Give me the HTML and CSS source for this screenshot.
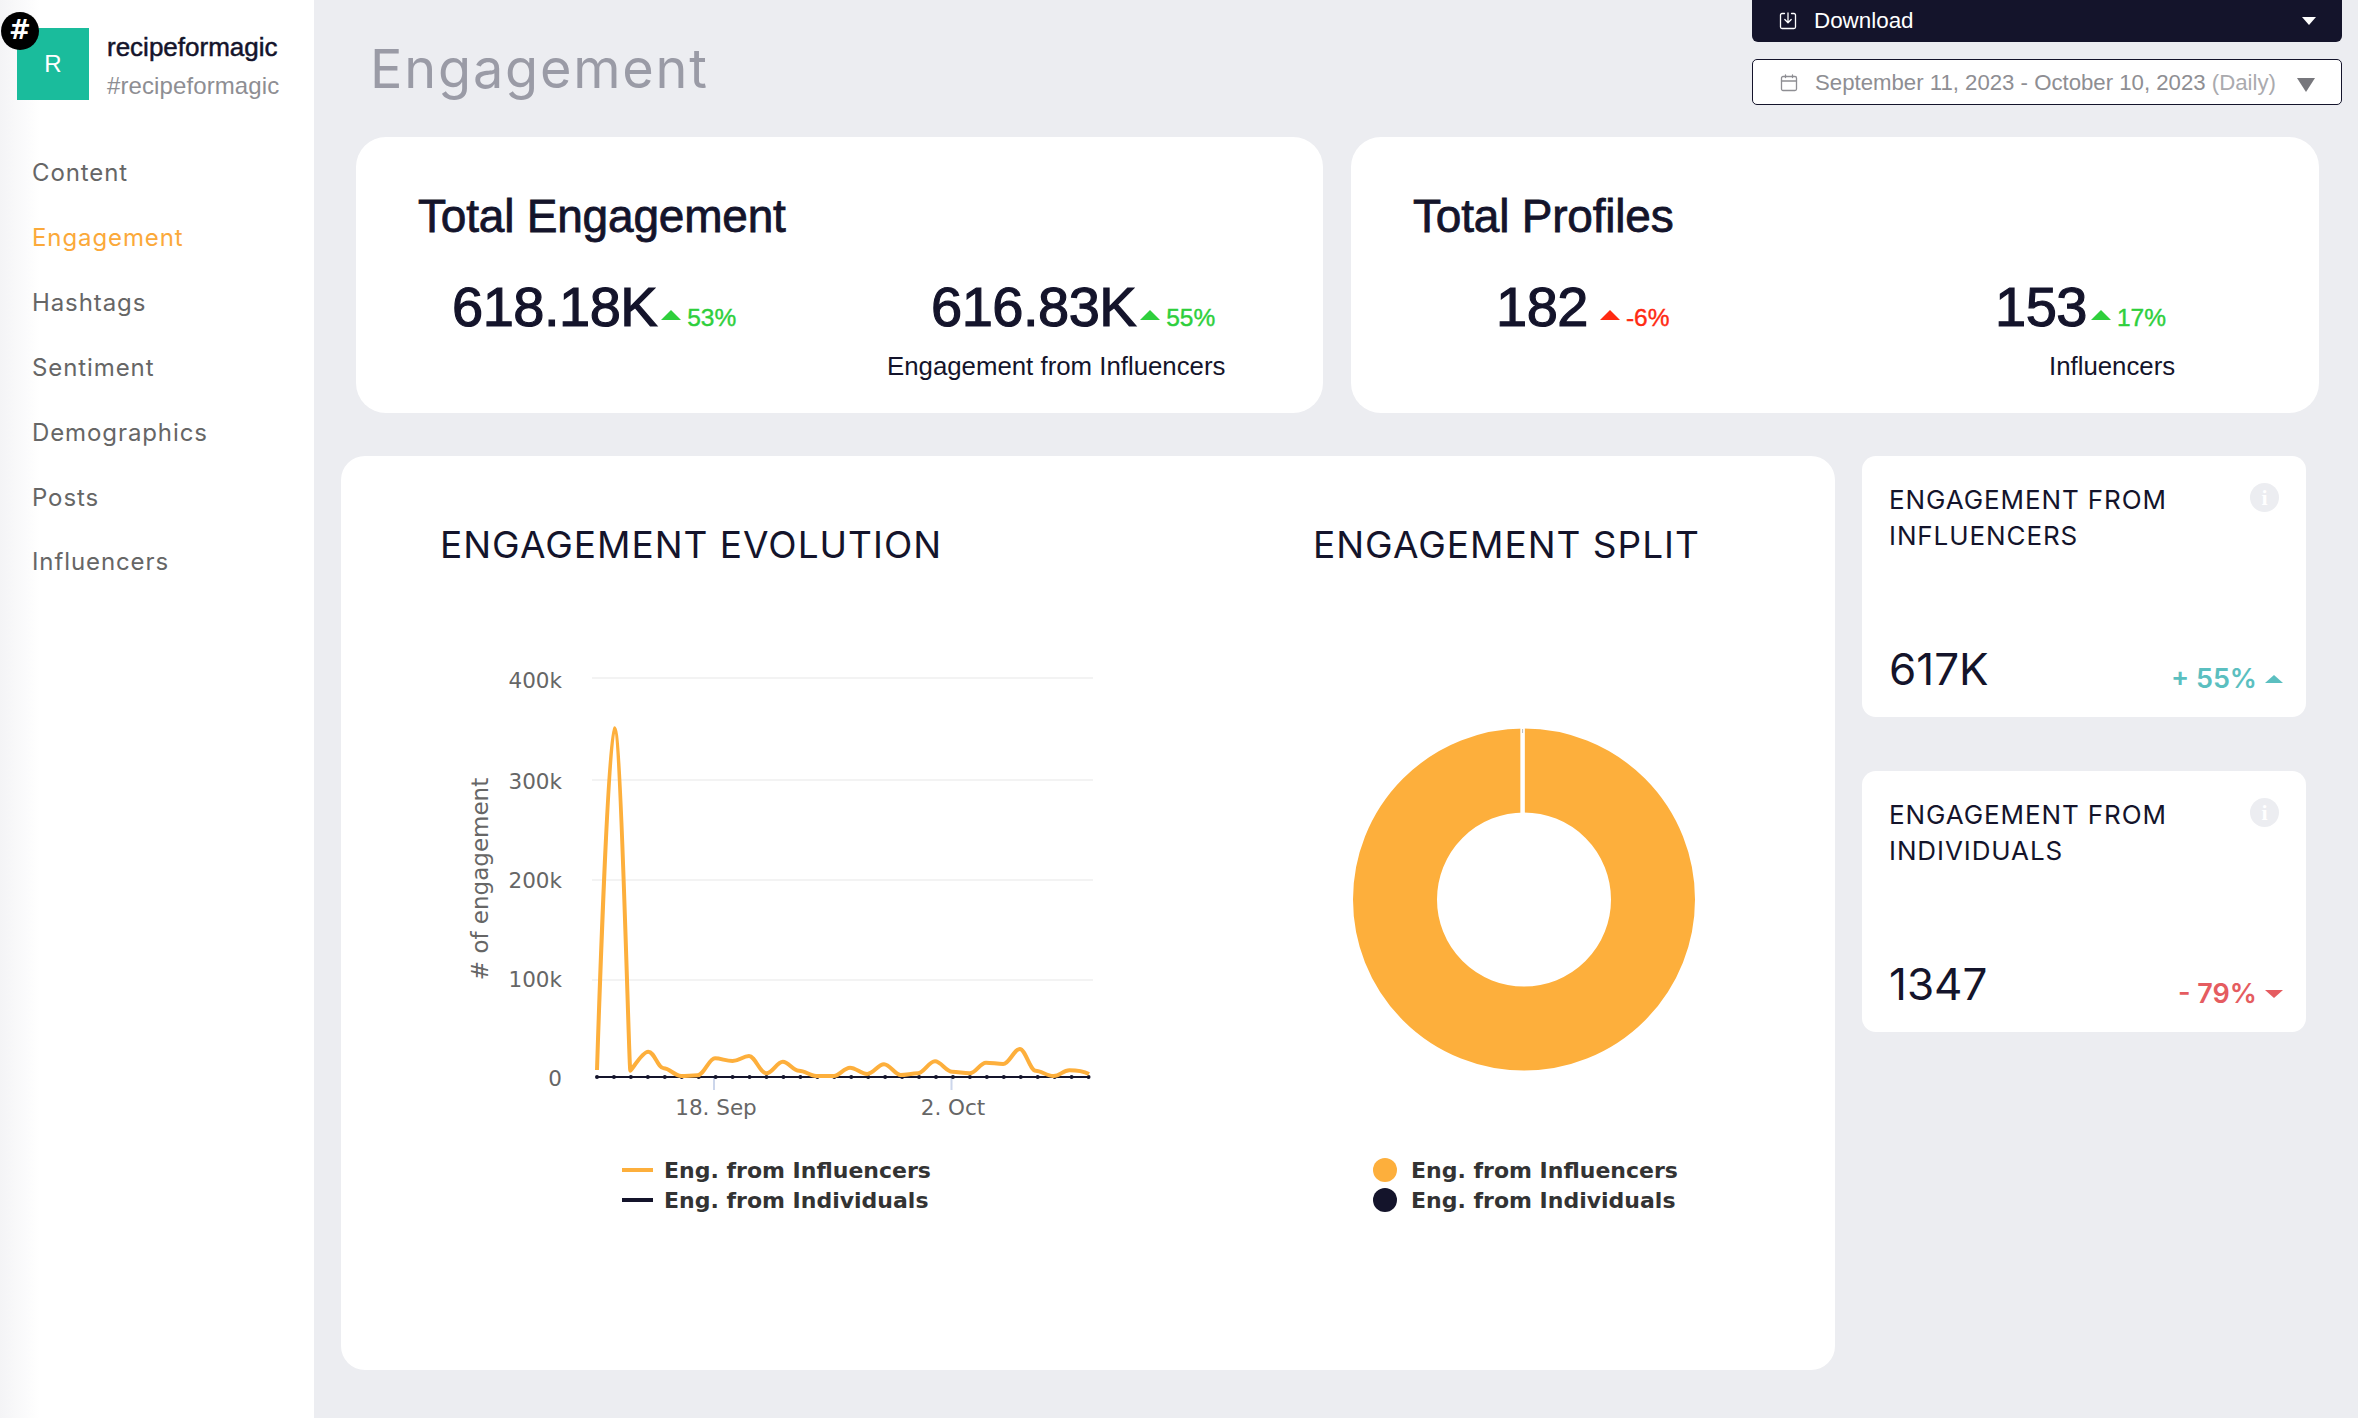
FILE: index.html
```html
<!DOCTYPE html>
<html lang="en">
<head>
    <meta charset="UTF-8">
    <title>Engagement</title>
    <link rel="stylesheet" href="styles.css">
</head>
<body>
    <aside class="sidebar">
        <div class="profile">
            <div class="avatar">R<span class="badge">#</span></div>
            <div class="profile-text">
                <div class="profile-name">recipeformagic</div>
                <div class="profile-tag">#recipeformagic</div>
            </div>
        </div>
        <nav class="nav">
            <a>Content</a>
            <a class="active">Engagement</a>
            <a>Hashtags</a>
            <a>Sentiment</a>
            <a>Demographics</a>
            <a>Posts</a>
            <a>Influencers</a>
        </nav>
    </aside>

    <main class="main">
        <header class="header">
            <h1>Engagement</h1>
            <div class="controls">
                <div class="btn-download">
                    <svg class="btn-icon" viewBox="0 0 18 18" fill="none" stroke="#fff" stroke-width="1.3" stroke-linejoin="round" stroke-linecap="round">
                        <path d="M5.5 1.5H3a1.5 1.5 0 0 0-1.500 1.500v12A1.500 1.500 0 0 0 3 16.500h12a1.500 1.500 0 0 0 1.500-1.500V3A1.500 1.500 0 0 0 15 1.500h-2.500"/>
                        <path d="M9 1v9.500M5.800 7.500 9 10.700l3.200-3.200"/>
                    </svg>
                    <span>Download</span>
                    <span class="caret-white"></span>
                </div>
                <div class="date-range">
                    <svg class="btn-icon" viewBox="0 0 18 18" fill="none" stroke="#8e8e93" stroke-width="1.300" stroke-linejoin="round" stroke-linecap="round">
                        <rect x="1.500" y="2.500" width="15" height="14" rx="1.500"/>
                        <path d="M1.500 7h15M5.500 1v2.500M12.500 1v2.500"/>
                    </svg>
                    <span class="date-text">September 11, 2023 - October 10, 2023 <span class="date-mode">(Daily)</span></span>
                    <span class="caret-gray"></span>
                </div>
            </div>
        </header>

        <section class="totals">
            <div class="total-card">
                <h2>Total Engagement</h2>
                <div class="stats stats-engagement">
                    <div class="stat">
                        <div class="stat-line">
                            <span class="stat-num">618.18K</span>
                            <span class="tri-up green"></span>
                            <span class="stat-pct green-text">53%</span>
                        </div>
                    </div>
                    <div class="stat">
                        <div class="stat-line shift-num">
                            <span class="stat-num">616.83K</span>
                            <span class="tri-up green"></span>
                            <span class="stat-pct green-text">55%</span>
                        </div>
                        <div class="stat-label">Engagement from Influencers</div>
                    </div>
                </div>
            </div>
            <div class="total-card">
                <h2>Total Profiles</h2>
                <div class="stats stats-profiles">
                    <div class="stat">
                        <div class="stat-line">
                            <span class="stat-num">182</span>
                            <span class="tri-up red wide-gap"></span>
                            <span class="stat-pct red-text">-6%</span>
                        </div>
                    </div>
                    <div class="stat">
                        <div class="stat-line">
                            <span class="stat-num">153</span>
                            <span class="tri-up green"></span>
                            <span class="stat-pct green-text">17%</span>
                        </div>
                        <div class="stat-label shift-label">Influencers</div>
                    </div>
                </div>
            </div>
        </section>

        <section class="lower">
            <div class="chart-card">
                <div class="chart-col chart-evolution">
                    <h3>ENGAGEMENT EVOLUTION</h3>
                    <svg class="chart-svg" width="680" height="480" viewBox="440 650 680 480">
                        <g class="grid">
                            <path d="M592 678H1093M592 780H1093M592 880H1093M592 980H1093"/>
                        </g>
                        <path class="tick" d="M714 1078V1090M951.500 1078V1090"/>
                        <g class="axis-text">
                            <text x="562" y="688" text-anchor="end">400k</text>
                            <text x="562" y="789" text-anchor="end">300k</text>
                            <text x="562" y="888" text-anchor="end">200k</text>
                            <text x="562" y="987" text-anchor="end">100k</text>
                            <text x="562" y="1086" text-anchor="end">0</text>
                            <text x="716" y="1115" text-anchor="middle">18. Sep</text>
                            <text x="953" y="1115" text-anchor="middle">2. Oct</text>
                            <text class="axis-title" transform="translate(488 879) rotate(-90)" text-anchor="middle">#&#160;of engagement</text>
                        </g>
                        <path class="line-dark" d="M597 1077H1089"/>
                        <path class="line-dots" d="M597 1077H1090"/>
                        <path class="line-orange" d="M597 1070C597 1070 608 728.300 614.400 728.300C621 728.300 629 1070.700 630.300 1070.700S642 1051.700 648.200 1051.700S658 1068.300 663.700 1068.300S675 1076 681.200 1076S691 1075.300 697.400 1075.300S709 1058.300 715 1058.300S726 1061 732.500 1061S743 1056 749 1056S760 1073.300 766.300 1073.300S777 1061.700 782.800 1061.700S793 1070.700 799 1070.700S810 1076 816.200 1076S828 1076 833.800 1076S844 1067.700 850 1067.700S861 1074 867.200 1074S878 1064.300 884 1064.300S895 1075 900.600 1075S912 1073.300 917.800 1073.300S929 1061.300 935 1061.300S946 1071.700 952.200 1071.700S963 1073.300 969.500 1073.300S980 1062.700 986 1062.700S997 1064 1003.200 1064S1014 1049 1019.700 1049S1030 1070.700 1035.600 1070.700S1047 1076 1053.500 1076S1063 1070.300 1069.300 1070.300S1083 1071 1089 1074"/>
                    </svg>
                    <div class="legend legend-line">
                        <div class="legend-row"><span class="swatch-line orange-bg"></span>Eng. from Influencers</div>
                        <div class="legend-row"><span class="swatch-line dark-bg"></span>Eng. from Individuals</div>
                    </div>
                </div>
                <div class="chart-col chart-split">
                    <h3>ENGAGEMENT SPLIT</h3>
                    <svg class="chart-svg" width="400" height="480" viewBox="1313 650 400 480">
                        <circle class="donut" cx="1524" cy="899.500" r="129"/>
                        <path class="donut-gap" d="M1522.600 726V814"/>
                        <path class="donut-mark" d="M1522.600 729V733"/>
                    </svg>
                    <div class="legend legend-dots">
                        <div class="legend-row"><span class="swatch-dot orange-bg"></span>Eng. from Influencers</div>
                        <div class="legend-row"><span class="swatch-dot dark-bg"></span>Eng. from Individuals</div>
                    </div>
                </div>
            </div>

            <div class="side-cards">
                <div class="mini-card">
                    <div class="mini-top">
                        <div class="mini-title">ENGAGEMENT FROM INFLUENCERS</div>
                        <span class="info">i</span>
                    </div>
                    <div class="mini-bottom">
                        <span class="mini-value">617K</span>
                        <span class="mini-delta teal-text">+ 55%<span class="mini-up"></span></span>
                    </div>
                </div>
                <div class="mini-card">
                    <div class="mini-top">
                        <div class="mini-title">ENGAGEMENT FROM INDIVIDUALS</div>
                        <span class="info">i</span>
                    </div>
                    <div class="mini-bottom">
                        <span class="mini-value">1347</span>
                        <span class="mini-delta coral-text">- 79%<span class="mini-down"></span></span>
                    </div>
                </div>
            </div>
        </section>
    </main>
</body>
</html>
```

FILE: styles.css
```css
* {
    box-sizing: border-box;
}
html, body {
    height: 100%;
}
body {
    margin: 0;
    display: flex;
    background-color: #ecedf1;
    font-family: "Liberation Sans", Arial, sans-serif;
    color: #14142b;
    overflow: hidden;
}

/* sidebar */
.sidebar {
    width: 314px;
    flex-shrink: 0;
    background: linear-gradient(90deg, #f4f4f6, #fff 40px);
}
.profile {
    display: flex;
    padding: 28px 0 0 17px;
}
.avatar {
    position: relative;
    width: 72px;
    height: 72px;
    background-color: #1abc9c;
    color: #fff;
    font-size: 24px;
    line-height: 72px;
    text-align: center;
}
.badge {
    position: absolute;
    left: -16px;
    top: -16px;
    width: 38px;
    height: 38px;
    border-radius: 50%;
    background-color: #000;
    color: #fff;
    font-family: "DejaVu Sans", sans-serif;
    font-weight: bold;
    font-size: 26px;
    line-height: 36px;
}
.profile-text {
    margin-left: 18px;
}
.profile-name {
    font-size: 26px;
    -webkit-text-stroke: 0.5px #14142b;
    line-height: 30px;
    margin-top: 4px;
}
.profile-tag {
    font-size: 24px;
    color: #8e8e93;
    line-height: 30px;
    margin-top: 9px;
    letter-spacing: 0.100px;
}
.nav {
    display: flex;
    flex-direction: column;
    padding: 40px 0 0 32px;
}
.nav a {
    font-family: Inter, sans-serif;
    font-size: 24px;
    line-height: 64.900px;
    color: #666;
    letter-spacing: 0.900px;
}
.nav a.active {
    color: #fba93a;
}

/* header */
.main {
    flex: 1;
    min-width: 0;
}
.header {
    display: flex;
    justify-content: space-between;
    height: 137px;
    padding-left: 56px;
    padding-right: 16px;
}
h1 {
    margin: 39px 0 0;
    font-family: Inter, sans-serif;
    font-weight: 400;
    font-size: 54px;
    line-height: 60px;
    color: #9a9ba6;
    letter-spacing: 1.800px;
}
.controls {
    width: 590px;
}
.btn-download {
    display: flex;
    align-items: center;
    height: 42px;
    padding: 0 26px 0 27px;
    background-color: #14142b;
    color: #fff;
    font-size: 22.400px;
    border-radius: 0 0 6px 6px;
}
.btn-icon {
    width: 18px;
    height: 18px;
    margin-right: 17px;
    flex-shrink: 0;
}
.caret-white {
    margin-left: auto;
    border-left: 7px solid transparent;
    border-right: 7px solid transparent;
    border-top: 8px solid #fff;
}
.date-range {
    display: flex;
    align-items: center;
    height: 46px;
    margin-top: 17px;
    padding: 2px 26px 0 27px;
    background-color: #fff;
    border: 1px solid #14142b;
    border-radius: 5px;
    color: #8e8e93;
    font-size: 22.200px;
}
.date-mode {
    color: #aaaaae;
}
.caret-gray {
    margin-left: auto;
    margin-top: 4px;
    border-left: 9px solid transparent;
    border-right: 9px solid transparent;
    border-top: 14px solid #77777c;
}

/* total cards */
.totals {
    display: flex;
    gap: 28px;
    padding-left: 42px;
}
.total-card {
    width: 967px;
    height: 276px;
    background-color: #fff;
    border-radius: 30px;
    padding-top: 54px;
}
.total-card:last-child {
    width: 968px;
}
h2 {
    margin: 0;
    padding-left: 62px;
    font-size: 46px;
    font-weight: 400;
    -webkit-text-stroke: 0.8px #14142b;
    letter-spacing: -0.200px;
    line-height: 50px;
}
.stats {
    display: flex;
    margin-top: 34px;
}
.stats-engagement {
    padding-left: 96px;
}
.stats-engagement .stat:first-child {
    width: 435px;
}
.stats-profiles {
    padding-left: 145px;
}
.stats-profiles .stat:first-child {
    width: 499px;
}
.stat-line {
    display: flex;
    align-items: baseline;
}
.shift-num {
    margin-left: 44px;
}
.shift-label {
    margin-left: 54px;
}
.stat-num {
    font-size: 56px;
    font-weight: 400;
    -webkit-text-stroke: 1.200px #14142b;
    letter-spacing: -0.500px;
    line-height: 64px;
}
.stat-pct {
    font-size: 24.500px;
    -webkit-text-stroke: 0.4px;
    margin-left: 6px;
}
.tri-up {
    width: 0;
    height: 0;
    margin-left: 4px;
    border-left: 10px solid transparent;
    border-right: 10px solid transparent;
    border-bottom: 10px solid;
    transform: translateY(-6px);
}
.wide-gap {
    margin-left: 12px;
}
.green {
    border-bottom-color: #2ecf3c;
}
.red {
    border-bottom-color: #ff2a12;
}
.green-text {
    color: #2ecf3c;
}
.red-text {
    color: #ff2a12;
}
.stat-label {
    margin-top: 12px;
    font-size: 25.800px;
    line-height: 30px;
    color: #14142b;
}

/* lower row */
.lower {
    display: flex;
    gap: 27px;
    margin-top: 43px;
    padding-left: 27px;
}
.chart-card {
    display: flex;
    width: 1494px;
    height: 914px;
    padding: 67px 0 0 99px;
    background-color: #fff;
    border-radius: 24px;
}
.chart-evolution {
    width: 680px;
}
.chart-split {
    width: 400px;
    margin-left: 193px;
}
h3 {
    margin: 0 0 83px;
    font-family: Inter, sans-serif;
    font-weight: 400;
    font-size: 37px;
    line-height: 44px;
    white-space: nowrap;
    letter-spacing: 1px;
}
.chart-svg {
    display: block;
}
.grid path {
    stroke: #f3f3f3;
    stroke-width: 2;
    fill: none;
}
.tick {
    stroke: #ccd6eb;
    stroke-width: 2;
    fill: none;
}
.axis-text text {
    font-family: "DejaVu Sans", sans-serif;
    font-size: 21.500px;
    fill: #666;
}
.axis-text .axis-title {
    font-size: 23px;
}
.line-dark {
    stroke: #14142b;
    stroke-width: 2;
    fill: none;
}
.line-dots {
    stroke: #14142b;
    stroke-width: 4;
    stroke-linecap: round;
    stroke-dasharray: 0 16.950;
    fill: none;
}
.line-orange {
    stroke: #fdaf3c;
    stroke-width: 4;
    fill: none;
}
.donut {
    fill: none;
    stroke: #fdaf3c;
    stroke-width: 84;
}
.donut-gap {
    stroke: #fff;
    stroke-width: 4.500;
}
.donut-mark {
    stroke: #bbb;
    stroke-width: 1;
}
.legend {
    margin-top: 25px;
    font-family: "DejaVu Sans", sans-serif;
    font-weight: bold;
    font-size: 22px;
    color: #333;
}
.legend-line {
    padding-left: 182px;
}
.legend-dots {
    padding-left: 60px;
}
.legend-row {
    display: flex;
    align-items: center;
    height: 30px;
    white-space: nowrap;
}
.swatch-line {
    width: 31px;
    height: 4px;
    margin-right: 11px;
}
.swatch-dot {
    width: 24px;
    height: 24px;
    border-radius: 50%;
    margin-right: 14px;
}
.orange-bg {
    background-color: #fdaf3c;
}
.dark-bg {
    background-color: #14142b;
}

/* small cards */
.side-cards {
    display: flex;
    flex-direction: column;
    gap: 54px;
    width: 444px;
}
.mini-card {
    display: flex;
    flex-direction: column;
    justify-content: space-between;
    height: 261px;
    padding: 26px 23px 23px 27px;
    background-color: #fff;
    border-radius: 14px;
}
.mini-top {
    display: flex;
    justify-content: space-between;
    align-items: flex-start;
}
.mini-title {
    width: 340px;
    font-family: Inter, sans-serif;
    font-size: 26px;
    line-height: 36px;
    letter-spacing: 0.900px;
}
.info {
    width: 29px;
    height: 29px;
    border-radius: 50%;
    margin: 1px 4px 0 0;
    background-color: #ecedf1;
    color: #fff;
    font-family: "Liberation Serif", serif;
    font-weight: bold;
    font-size: 22px;
    line-height: 29px;
    text-align: center;
}
.mini-bottom {
    display: flex;
    justify-content: space-between;
    align-items: baseline;
}
.mini-value {
    font-family: Inter, sans-serif;
    font-size: 44px;
    line-height: 50px;
}
.mini-delta {
    display: flex;
    align-items: center;
    font-family: Inter, sans-serif;
    font-weight: 600;
    font-size: 27px;
    transform: translateY(3px);
}
.mini-up, .mini-down {
    width: 0;
    height: 0;
    margin-left: 8px;
    border-left: 9px solid transparent;
    border-right: 9px solid transparent;
}
.mini-up {
    border-bottom: 8px solid #5bbfc0;
}
.mini-down {
    border-top: 8px solid #e55c60;
}
.teal-text {
    color: #5bbfc0;
}
.coral-text {
    color: #e55c60;
}
```
